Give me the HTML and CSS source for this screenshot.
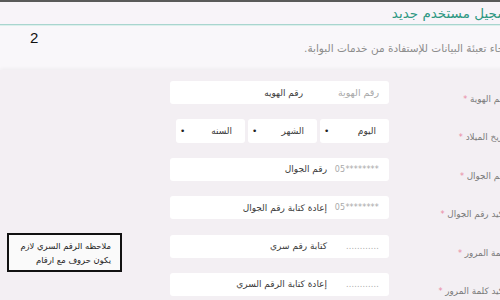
FILE: index.html
```html
<!DOCTYPE html>
<html lang="ar" dir="rtl">
<head>
  <meta charset="UTF-8" />
  <meta name="viewport" content="width=device-width, initial-scale=1.0" />
  <title>تسجيل مستخدم جديد</title>
  <link rel="stylesheet" href="styles.css">
</head>
<body>
  <div class="topbar"></div>

  <div class="page">
    <header class="head">
      <h1 class="title">تسجيل مستخدم جديد</h1>
    </header>
    <p class="intro">برجاء تعبئة البيانات للإستفادة من خدمات البوابة.</p>

    <!-- Registration form -->
    <form class="form" autocomplete="off">
      <div class="row">
        <label class="label">رقم الهوية <span class="req">*</span></label>
        <div class="box">
          <span class="hint">رقم الهوية</span>
          <span class="val val-far">رقم الهويه</span>
        </div>
      </div>

      <div class="row">
        <label class="label">تاريخ الميلاد <span class="req">*</span></label>
        <div class="dates">
          <div class="box select"><span class="val">اليوم</span><span class="caret">•</span></div>
          <div class="box select"><span class="val">الشهر</span><span class="caret">•</span></div>
          <div class="box select"><span class="val">السنه</span><span class="caret">•</span></div>
        </div>
      </div>

      <div class="row">
        <label class="label">رقم الجوال <span class="req">*</span></label>
        <div class="box">
          <span class="hint num">05********</span>
          <span class="val">رقم الجوال</span>
        </div>
      </div>

      <div class="row">
        <label class="label">تأكيد رقم الجوال <span class="req">*</span></label>
        <div class="box">
          <span class="hint num">05********</span>
          <span class="val">إعادة كتابة رقم الجوال</span>
        </div>
      </div>

      <div class="row">
        <label class="label">كلمة المرور <span class="req">*</span></label>
        <div class="box">
          <span class="hint num">............</span>
          <span class="val">كتابة رقم سري</span>
        </div>
      </div>

      <div class="row">
        <label class="label">تأكيد كلمة المرور <span class="req">*</span></label>
        <div class="box">
          <span class="hint num">............</span>
          <span class="val">إعادة كتابة الرقم السري</span>
        </div>
      </div>
    </form>
  </div>

  <span class="step">2</span>
  <div class="note">ملاحظه الرقم السري لازم<br>يكون حروف مع ارقام</div>
</body>
</html>
```

FILE: styles.css
```css
:root {
  --page-bg: #f9f7fa;
  --panel-bg: #f3eff3;
  --teal: #2f9883;
  --line: #a9d5cf;
  --label: #7a7a7a;
  --req: #e98aa3;
  --hint: #a9a9a9;
  --ink: #3a3a3a;
}
*, *::before, *::after { box-sizing: border-box; }
html, body {
  margin: 0; padding: 0; height: 100%;
  font-family: 'DejaVu Sans', sans-serif;
  background: var(--page-bg); color: var(--ink);
  overflow: hidden;
}
body { position: relative; }

.topbar { height: 2px; background: #5a5a5a; }

/* page runs a little past the right edge of the window */
.page { margin-right: -13px; }

.head {
  height: 23px; background: #f8f4f9;
  border-bottom: 1px solid var(--line);
  box-shadow: 0 1px 0 #dcefec;
}
.title {
  margin: 0; font-size: 13.5px; font-weight: normal;
  line-height: 22px; color: var(--teal);
}

.intro {
  margin: 0; height: 45px; line-height: 46px;
  font-size: 10.5px; color: #8c8c8c;
}

.form {
  background: var(--panel-bg);
  padding-top: 11px; height: 240px;
  box-shadow: 0 -1px 4px rgba(0,0,0,0.05);
}
.row {
  display: grid; grid-template-columns: 124px 219px;
  height: 38.4px; align-items: start;
}
.label {
  padding: 11px 5px 0 0; font-size: 8.8px; line-height: 14px;
  color: var(--label); white-space: nowrap;
}
.req { color: var(--req); font-size: 8px; }

.box {
  display: flex; align-items: center;
  height: 23px; padding: 0 10px;
  background: #fff; border-radius: 3px;
  font-size: 9px; white-space: nowrap;
}
.hint { color: var(--hint); min-width: 46px; font-size: 9.5px; }
.hint.num { direction: ltr; text-align: right; font-size: 8px; letter-spacing: .2px; }
.val { color: var(--ink); margin-right: 6px; }
.val-far { margin-right: 30px; }

.dates { display: flex; gap: 3px; }
.select {
  width: 69px; height: 24px;
  justify-content: space-between;
  padding: 0 13px 0 4px;
}
.select .val { margin: 0; }
.caret { font-size: 9px; color: #222; }

/* annotations drawn over the screenshot */
.step {
  position: absolute; left: 30px; top: 29px;
  font: 15px 'Liberation Sans', sans-serif; color: #111;
}
.note {
  position: absolute; left: 7px; top: 233px;
  width: 115px; height: 39px; padding: 5px 9px;
  border: 2px solid #111; background: #fafafa;
  font-size: 8.4px; line-height: 13.5px; color: #222;
  text-align: right; white-space: nowrap;
}
```
